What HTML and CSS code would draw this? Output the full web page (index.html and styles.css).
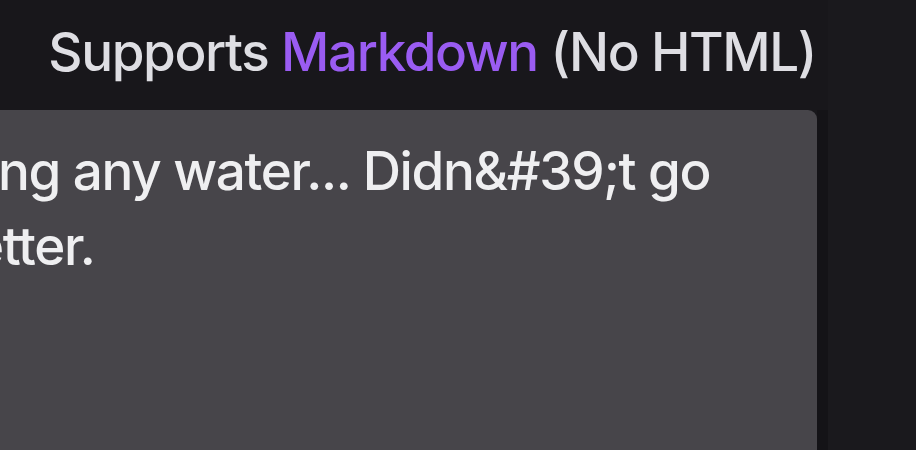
FILE: index.html
```html
<!DOCTYPE html>
<html>
<head>
<meta charset="utf-8">
<link rel="stylesheet" href="styles.css">
</head>
<body>
<div class="page">
  <div class="main">
    <div class="hint">Supports <span class="link">Markdown</span> (No HTML)</div>
    <div class="box">
      <div class="line l1">ng any water... Didn&amp;#39;t go</div>
      <div class="line l2">etter.</div>
    </div>
  </div>
  <div class="edge"></div>
  <div class="side"></div>
</div>
</body>
</html>
```
FILE: styles.css
```css
html, body {
  margin: 0;
  padding: 0;
  background: #18171b;
  overflow: hidden;
}
.page {
  display: flex;
  width: 916px;
  height: 450px;
  font-family: Inter, "Noto Sans", sans-serif;
}
.main {
  width: 817px;
  display: flex;
  flex-direction: column;
}
.hint {
  height: 110px;
  box-sizing: border-box;
  padding-top: 20px;
  padding-right: 1px;
  text-align: right;
  font-size: 53px;
  font-weight: 500;
  letter-spacing: -1.4px;
  line-height: 64px;
  color: #dedee3;
  white-space: nowrap;
}
.link {
  color: #9a5cf2;
}
.box {
  flex: 1;
  background: #47454a;
  border-top-right-radius: 9px;
  padding-top: 24px;
  font-size: 53px;
  font-weight: 500;
  letter-spacing: -1.35px;
  line-height: 75px;
  color: #efeff1;
  white-space: nowrap;
  overflow: hidden;
}
.l1 {
  margin-left: -2px;
}
.l2 {
  margin-left: -27px;
}
.edge {
  width: 11px;
  margin-top: 110px;
  background: #141317;
}
.side {
  flex: 1;
  background: #1a191d;
}
```
